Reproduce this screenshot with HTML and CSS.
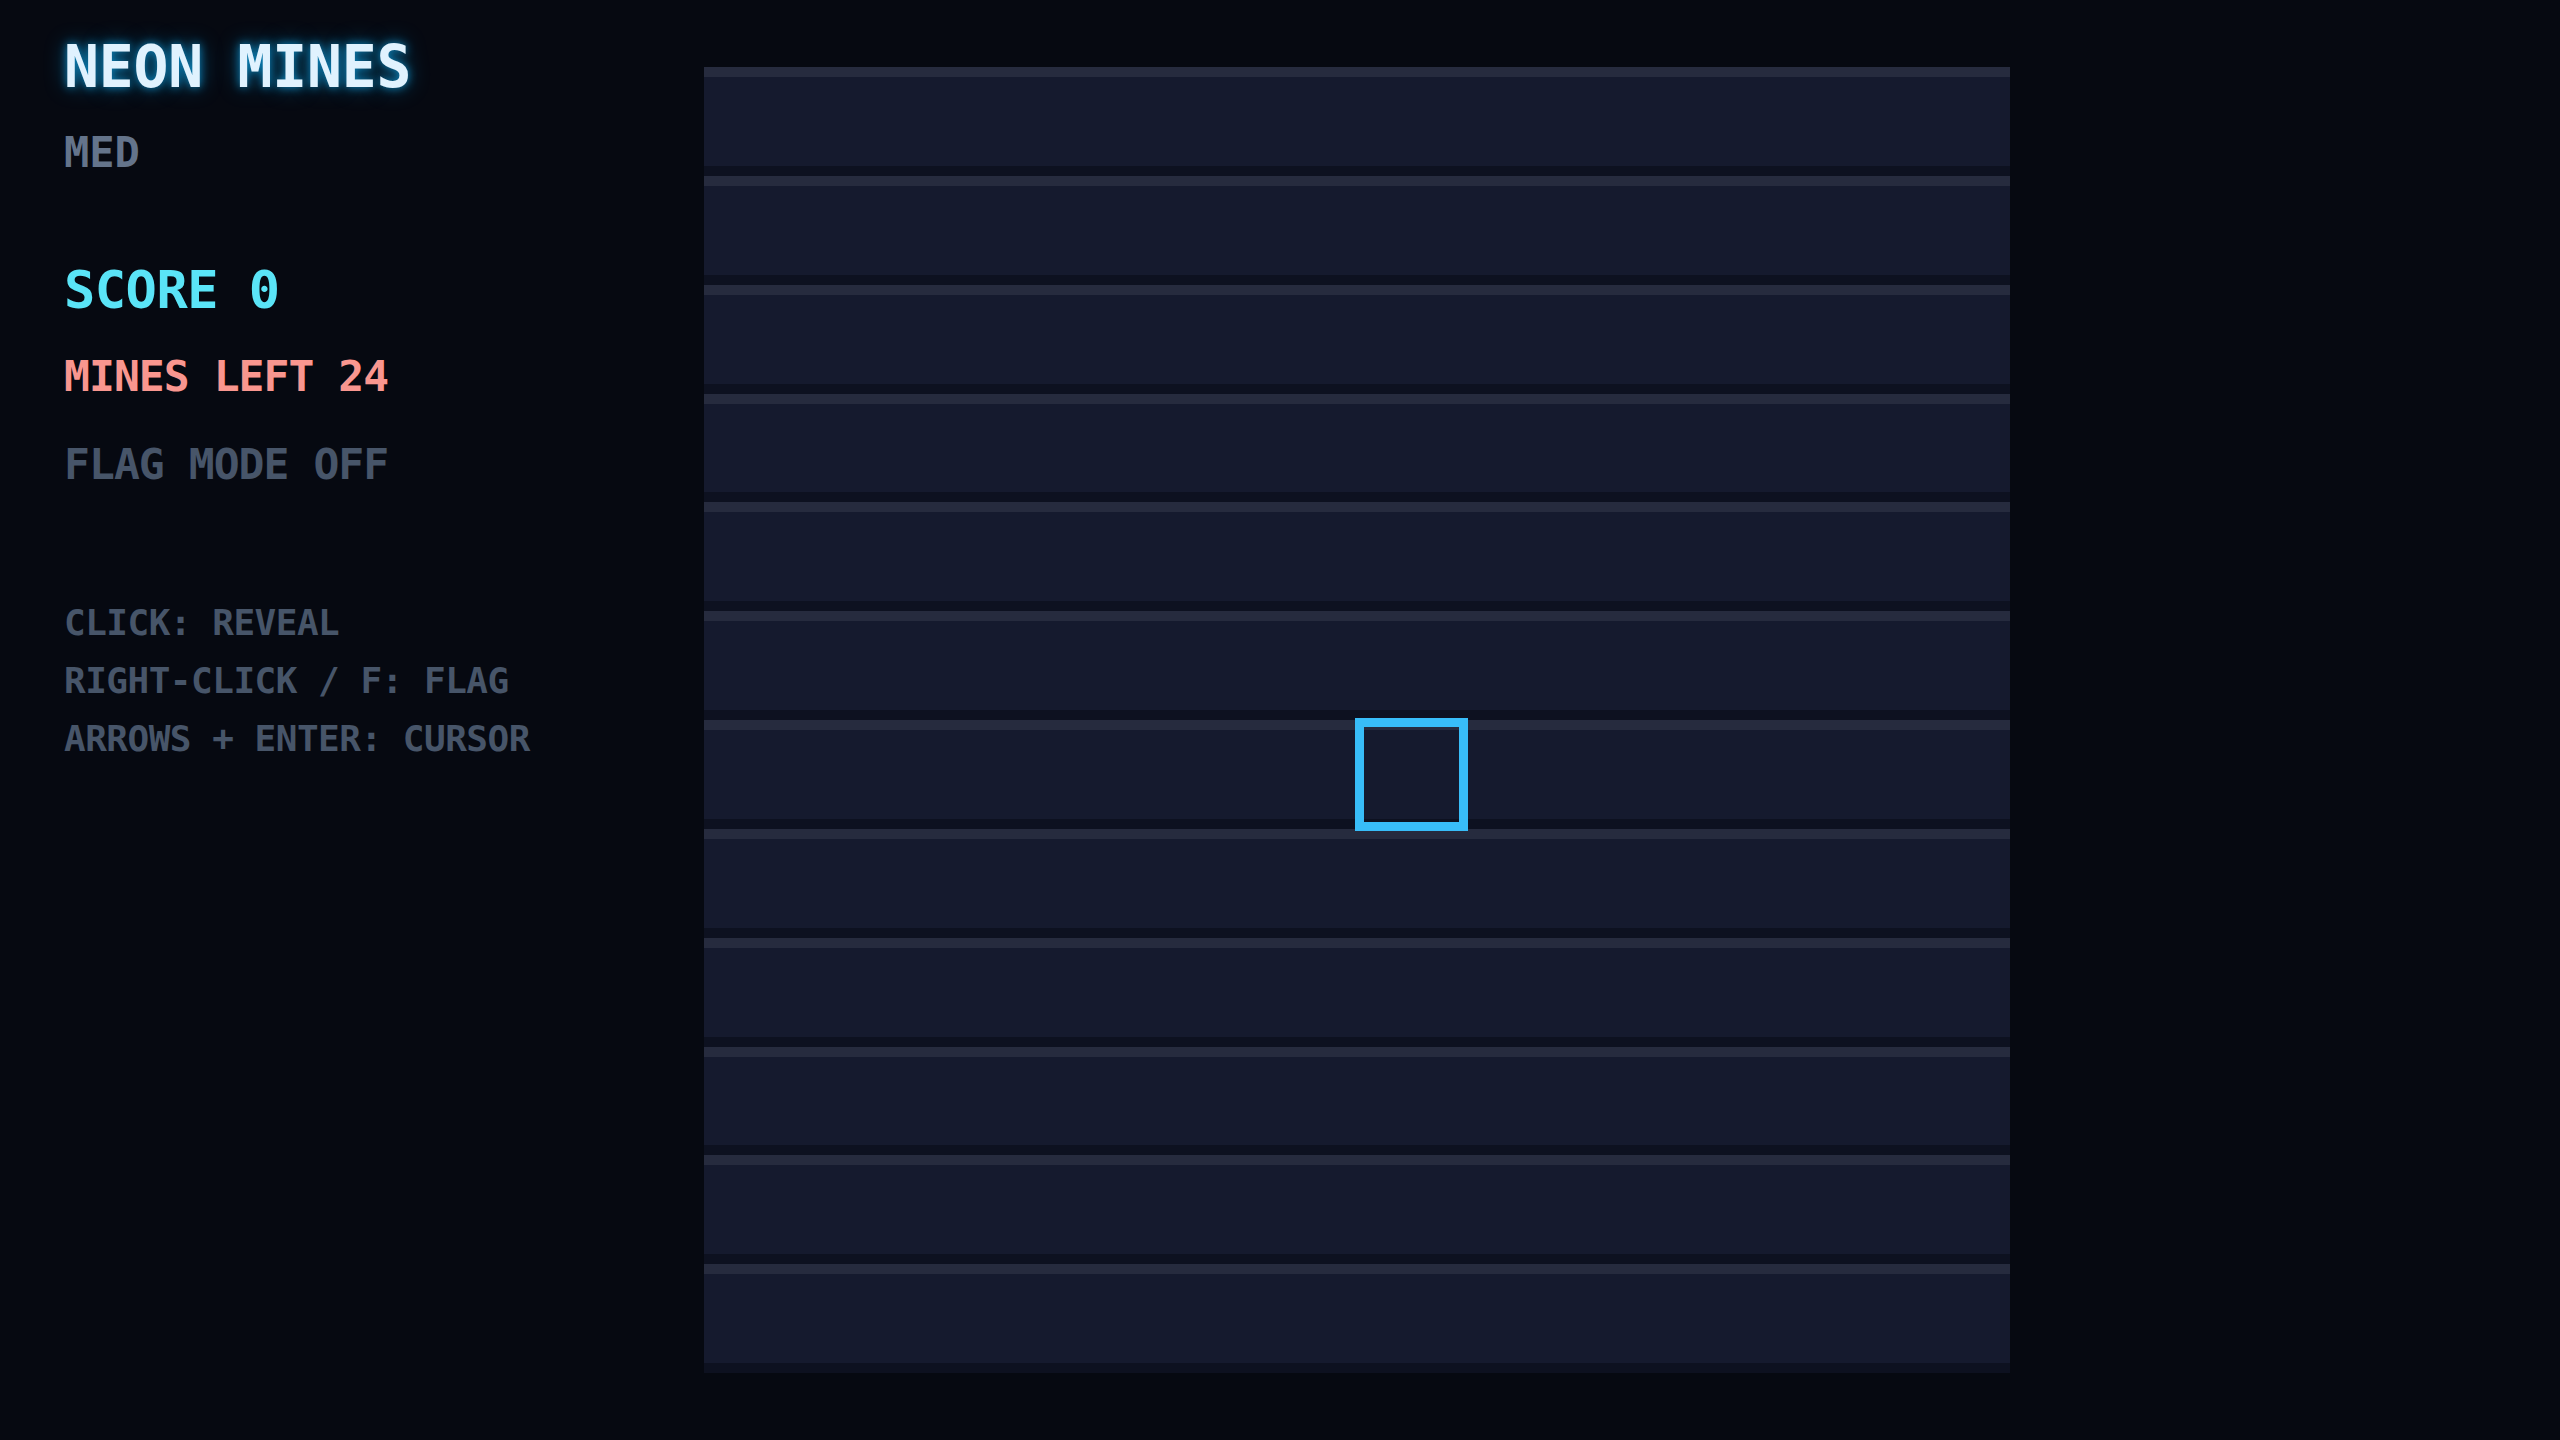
FILE: index.html
```html
<!DOCTYPE html>
<html lang="en">
<head>
<meta charset="utf-8">
<title>Neon Mines</title>
<link rel="stylesheet" href="styles.css">
</head>
<body>
<div class="app">
  <aside class="panel">
    <h1 class="title">NEON MINES</h1>
    <div class="difficulty">MED</div>
    <div class="score">SCORE 0</div>
    <div class="mines">MINES LEFT 24</div>
    <div class="flag">FLAG MODE OFF</div>
    <ul class="help">
      <li>CLICK: REVEAL</li>
      <li>RIGHT-CLICK / F: FLAG</li>
      <li>ARROWS + ENTER: CURSOR</li>
    </ul>
  </aside>
  <main class="board" id="board"></main>
</div>
<script src="script.js"></script>
</body>
</html>
```
FILE: script.js
```js
(function () {
  var board = document.getElementById('board');
  for (var r = 0; r < 12; r++) {
    for (var c = 0; c < 12; c++) {
      var cell = document.createElement('div');
      cell.className = 'cell' + (r === 6 && c === 6 ? ' cursor' : '');
      board.appendChild(cell);
    }
  }
})();
```
FILE: styles.css
```css
html, body {
  margin: 0;
  padding: 0;
  background: #060911;
  height: 100%;
}
body {
  font-family: "DejaVu Sans Mono", "Liberation Mono", monospace;
  font-weight: bold;
  overflow: hidden;
}
.app {
  display: flex;
  gap: 64px;
  padding-left: 64px;
  height: 1440px;
  box-sizing: border-box;
}
.panel {
  width: 576px;
  flex: none;
  padding-top: 38px;
}
.title {
  margin: 0;
  font-size: 58px;
  line-height: 1;
  font-weight: bold;
  color: #e0f2fe;
  letter-spacing: -0.2px;
  text-shadow: 0 0 10px rgba(14, 165, 233, 0.8), 0 0 22px rgba(14, 165, 233, 0.45);
}
.difficulty {
  margin-top: 36px;
  font-size: 42px;
  line-height: 1;
  color: #64748b;
}
.score {
  margin-top: 90px;
  font-size: 52px;
  line-height: 1;
  letter-spacing: -0.5px;
  color: #5ae4f7;
}
.mines {
  margin-top: 39px;
  font-size: 43px;
  line-height: 1;
  letter-spacing: -0.95px;
  color: #f9968f;
}
.flag {
  margin-top: 45px;
  font-size: 43px;
  line-height: 1;
  letter-spacing: -0.95px;
  color: #475569;
}
.help {
  list-style: none;
  margin: 119px 0 0;
  padding: 0;
  display: flex;
  flex-direction: column;
  gap: 22px;
  font-size: 36px;
  line-height: 1;
  letter-spacing: -0.5px;
  color: #475569;
}
.board {
  margin-top: 67px;
  width: 1306px;
  height: 1306px;
  display: grid;
  grid-template-columns: repeat(12, 1fr);
  grid-template-rows: repeat(12, 1fr);
  background: #0d1120;
}
.cell {
  box-sizing: border-box;
  background: #151a2e;
  border-top: 10px solid #262b3e;
  border-bottom: 10px solid #0d1120;
}
.cursor {
  position: relative;
  z-index: 1;
  outline: 9px solid #38bdf8;
  outline-offset: -7px;
}
```
